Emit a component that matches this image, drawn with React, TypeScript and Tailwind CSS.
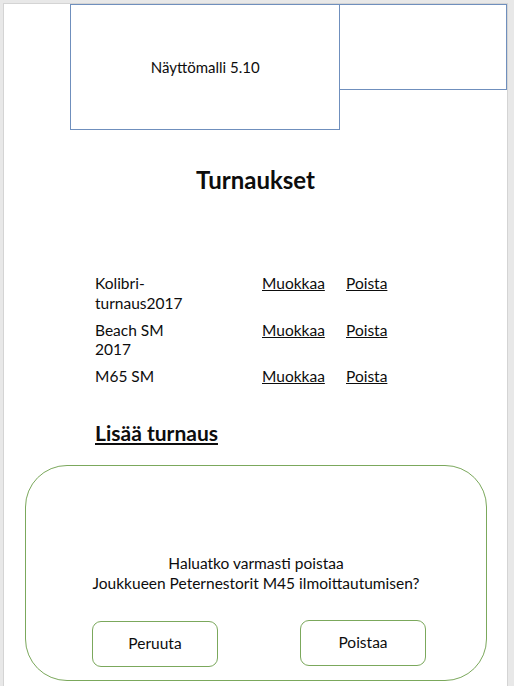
import React from "react";

const rows = [
  { name: "Kolibri-turnaus2017" },
  { name: "Beach SM 2017" },
  { name: "M65 SM" },
];

export default function App() {
  return (
    <div
      className="min-h-[686px] bg-[#e8e8e8] pl-[3px] pt-[3px] pr-[6px] overflow-hidden text-[#0d0d0d]"
      style={{ fontFamily: "Lato, 'Open Sans', sans-serif" }}
    >
      <div className="bg-white border-l border-t border-r border-[#d4d4d4] min-h-[683px] w-[505px]">
        <div className="flex pl-[66px]">
          <div className="w-[271px] h-[126px] border border-[#6f8fbd] flex items-center justify-center text-[15px]">
            Näyttömalli 5.10
          </div>
          <div className="-ml-px w-[168px] h-[86px] border border-[#6f8fbd]" />
        </div>

        <h1 className="mt-[35px] text-center text-[24px] leading-[30px] font-bold">Turnaukset</h1>

        <div className="mt-[79px] pl-[91px] flex flex-col gap-[7.5px] text-[15.5px] leading-[19.5px]">
          {rows.map((r) => (
            <div key={r.name} className="flex items-start">
              <div className="w-[92px] mr-[75px] break-words">
                {r.name === "Kolibri-turnaus2017" ? (
                  <>
                    Kolibri-
                    <br />
                    turnaus2017
                  </>
                ) : (
                  r.name
                )}
              </div>
              <a className="underline w-[84px]">Muokkaa</a>
              <a className="underline">Poista</a>
            </div>
          ))}
        </div>

        <div className="mt-[33px] pl-[91px] text-[21px] leading-[26px] font-bold underline">Lisää turnaus</div>

        <div className="mt-[19px] ml-[21px] w-[462px] h-[216px] border border-[#7ba85c] rounded-[42px] pt-[87px] flex flex-col">
          <p className="text-center text-[15.5px] leading-[20px]">
            Haluatko varmasti poistaa
            <br />
            Joukkueen Peternestorit M45 ilmoittautumisen?
          </p>
          <div className="mt-[28px] flex pl-[66px] gap-[82px]">
            <button className="w-[126px] h-[46px] border border-[#7ba85c] rounded-[9px] text-[15.5px] bg-white">
              Peruuta
            </button>
            <button className="-mt-px w-[126px] h-[46px] border border-[#7ba85c] rounded-[9px] text-[15.5px] bg-white">
              Poistaa
            </button>
          </div>
        </div>
      </div>
    </div>
  );
}
